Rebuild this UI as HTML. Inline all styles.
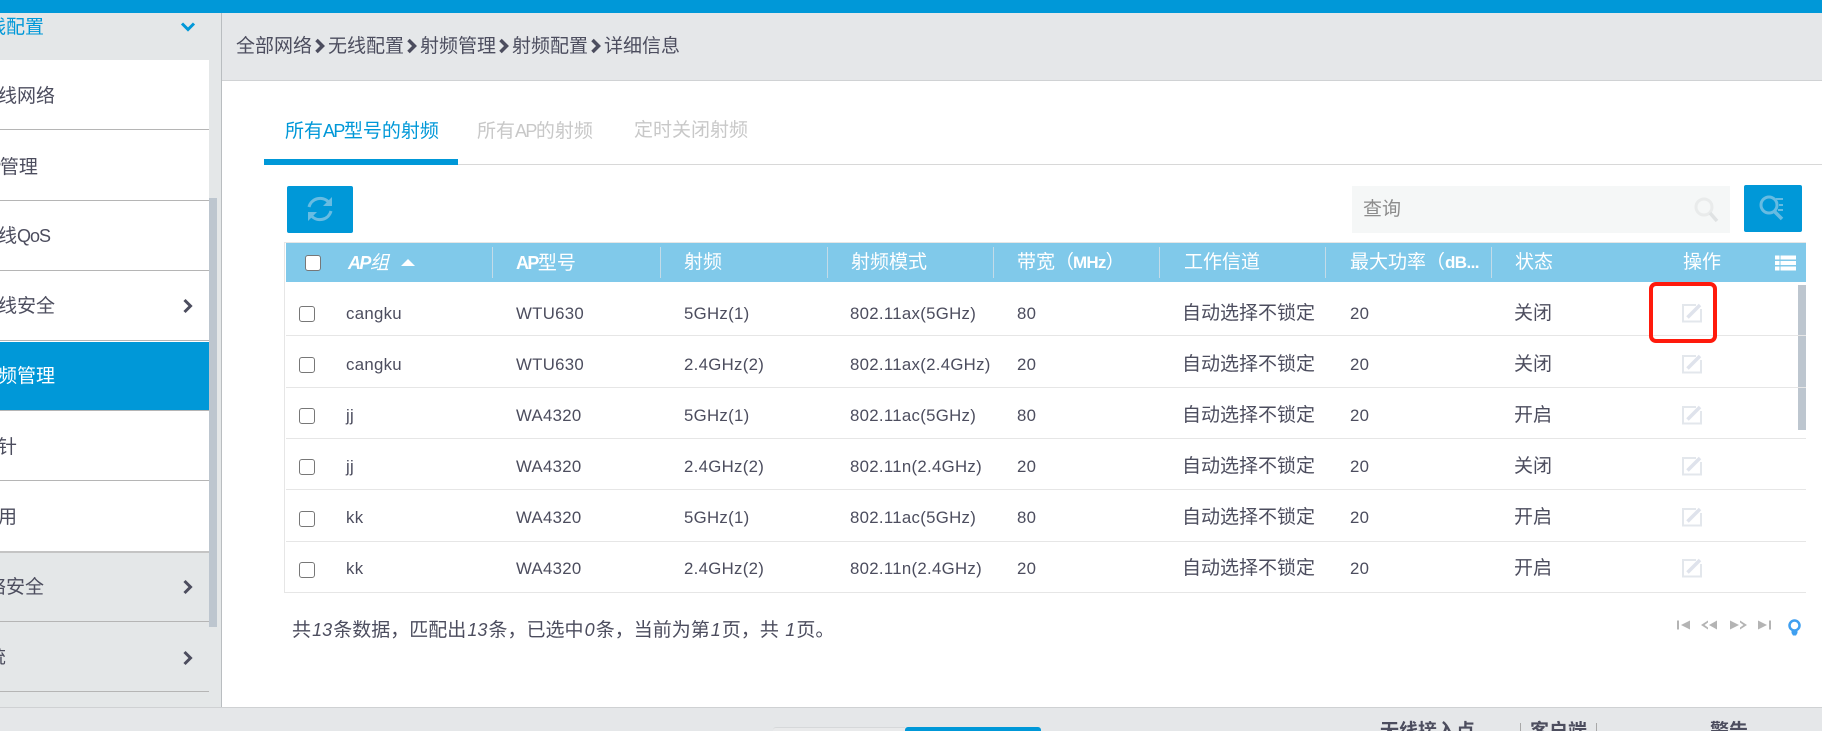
<!DOCTYPE html>
<html lang="zh-CN">
<head>
<meta charset="utf-8">
<title>射频配置</title>
<style>
html,body{margin:0;padding:0;width:1822px;height:731px;overflow:hidden;background:#fff}
body{position:relative;font-family:"Liberation Sans","Noto Sans CJK SC",sans-serif;color:#4c4d5e;font-size:19px}
.a,.t,.r,.s,.c,svg{position:absolute}
.t{white-space:nowrap;line-height:24px;height:24px}
.h{color:#fff}
.c{width:14px;height:14px;border:1px solid #777;border-radius:3px;background:#fff}
.d{font-size:16.8px;letter-spacing:.3px;margin-top:1px}
.m{font-size:19px;margin-top:1px}
.s{width:1px;top:247px;height:31px;background:#c3dbe8}
.r{left:286px;width:1520px;height:1px;background:#e6e6e6}
.n{left:0;width:209px;height:1px;background:#b5b5b5}
.l{font-size:18px;letter-spacing:-1.6px}
i{font-style:italic;font-size:18px;padding:0 1.1px}
</style>
</head>
<body>
<!-- top bar -->
<div class="a" style="left:0;top:0;width:1822px;height:13px;background:#0098d8"></div>

<!-- sidebar -->
<div class="a" style="left:0;top:13px;width:221px;height:694px;background:#e4e7e8"></div>
<div class="a" style="left:221px;top:13px;width:1px;height:694px;background:#b9bdc0"></div>
<div class="a" style="left:0;top:60px;width:209px;height:491px;background:#fff"></div>
<div class="a" style="left:0;top:342px;width:209px;height:68px;background:#0098d8"></div>
<div class="a" style="left:209px;top:198px;width:8px;height:429px;background:#bdc6cf"></div>
<div class="a n" style="top:129px"></div>
<div class="a n" style="top:200px"></div>
<div class="a n" style="top:270px"></div>
<div class="a n" style="top:340px"></div>
<div class="a n" style="top:410px"></div>
<div class="a n" style="top:480px"></div>
<div class="a n" style="top:551px;height:2px;background:#c4c4c4"></div>
<div class="a n" style="top:621px"></div>
<div class="a n" style="top:691px"></div>

<div class="t" style="left:-32px;top:16px;color:#0098d8">无线配置</div>
<div class="t" style="left:-21px;top:85px">无线网络</div>
<div class="t" style="left:-21px;top:155px"><span class="l">AP</span>管理</div>
<div class="t" style="left:-21px;top:224px">无线<span class="l" style="letter-spacing:-1px">QoS</span></div>
<div class="t" style="left:-21px;top:295px">无线安全</div>
<div class="t" style="left:-21px;top:365px;color:#fff">射频管理</div>
<div class="t" style="left:-21px;top:436px">探针</div>
<div class="t" style="left:-21px;top:506px">应用</div>
<div class="t" style="left:-32px;top:576px">网络安全</div>
<div class="t" style="left:-32px;top:646px">系统</div>

<svg style="left:180px;top:21px" width="16" height="12" viewBox="0 0 16 12"><path d="M2 2.5 L8 8.5 L14 2.5" fill="none" stroke="#0098d8" stroke-width="3"/></svg>
<svg style="left:182px;top:298px" width="12" height="16" viewBox="0 0 12 16"><path d="M2.5 2 L8.5 8 L2.5 14" fill="none" stroke="#4c4d5e" stroke-width="3"/></svg>
<svg style="left:182px;top:579px" width="12" height="16" viewBox="0 0 12 16"><path d="M2.5 2 L8.5 8 L2.5 14" fill="none" stroke="#4c4d5e" stroke-width="3"/></svg>
<svg style="left:182px;top:650px" width="12" height="16" viewBox="0 0 12 16"><path d="M2.5 2 L8.5 8 L2.5 14" fill="none" stroke="#4c4d5e" stroke-width="3"/></svg>

<!-- breadcrumb -->
<div class="a" style="left:222px;top:13px;width:1600px;height:67px;background:#e5e7e9;border-bottom:1px solid #d0d2d4"></div>
<div class="t" style="left:236px;top:35px">全部网络</div>
<div class="t" style="left:328px;top:35px">无线配置</div>
<div class="t" style="left:420px;top:35px">射频管理</div>
<div class="t" style="left:512px;top:35px">射频配置</div>
<div class="t" style="left:604px;top:35px">详细信息</div>
<svg style="left:314px;top:38px" width="12" height="16" viewBox="0 0 12 16"><path d="M2.5 2 L8.5 8 L2.5 14" fill="none" stroke="#4c4d5e" stroke-width="3.5"/></svg>
<svg style="left:406px;top:38px" width="12" height="16" viewBox="0 0 12 16"><path d="M2.5 2 L8.5 8 L2.5 14" fill="none" stroke="#4c4d5e" stroke-width="3.5"/></svg>
<svg style="left:498px;top:38px" width="12" height="16" viewBox="0 0 12 16"><path d="M2.5 2 L8.5 8 L2.5 14" fill="none" stroke="#4c4d5e" stroke-width="3.5"/></svg>
<svg style="left:590px;top:38px" width="12" height="16" viewBox="0 0 12 16"><path d="M2.5 2 L8.5 8 L2.5 14" fill="none" stroke="#4c4d5e" stroke-width="3.5"/></svg>

<!-- tabs -->
<div class="t" style="left:285px;top:119px;color:#0098d8">所有<span class="l">AP</span>型号的射频</div>
<div class="t" style="left:477px;top:119px;color:#c8c8c8">所有<span class="l">AP</span>的射频</div>
<div class="t" style="left:634px;top:119px;color:#c8c8c8">定时关闭射频</div>
<div class="a" style="left:264px;top:164px;width:1558px;height:1px;background:#d8d8d8"></div>
<div class="a" style="left:264px;top:159px;width:194px;height:6px;background:#0098d8"></div>

<!-- toolbar -->
<div class="a" style="left:287px;top:186px;width:66px;height:47px;background:#0098d8;border-radius:2px"></div>
<svg style="left:305px;top:194px" width="30" height="30" viewBox="0 0 30 30" fill="none"><path d="M4 13 A11.5 11.5 0 0 1 23.5 8" stroke="#68bce2" stroke-width="3"/><path d="M26 17 A11.5 11.5 0 0 1 6.5 22" stroke="#68bce2" stroke-width="3"/><path d="M27 3 L27 12 L18 12 Z" fill="#68bce2"/><path d="M3 27 L3 18 L12 18 Z" fill="#68bce2"/></svg>

<div class="a" style="left:1352px;top:186px;width:378px;height:47px;background:#f5f7f7"></div>
<div class="t" style="left:1363px;top:198px;color:#8c8c8c">查询</div>
<svg style="left:1693px;top:196px" width="26" height="28" viewBox="0 0 26 28" fill="none"><circle cx="11" cy="11" r="8" stroke="#e9ebeb" stroke-width="3"/><path d="M17 17 L24 25" stroke="#dfe2e3" stroke-width="3.5"/></svg>

<div class="a" style="left:1744px;top:185px;width:58px;height:47px;background:#0098d8;border-radius:2px"></div>
<svg style="left:1758px;top:193px" width="28" height="30" viewBox="0 0 28 30" fill="none"><circle cx="11" cy="12" r="8" stroke="#66bbe2" stroke-width="3"/><path d="M16 18 L24 26" stroke="#66bbe2" stroke-width="3.5"/><path d="M18 6 H25 M21 12 H25 M20 17 H25" stroke="#66bbe2" stroke-width="2"/></svg>

<!-- table frame -->
<div class="a" style="left:284px;top:242px;width:1522px;height:351px;border:1px solid #e6e6e6;box-sizing:border-box;border-right:none"></div>
<div class="a" style="left:286px;top:243px;width:1520px;height:39px;background:#80c9ea"></div>
<div class="s" style="left:492px"></div>
<div class="s" style="left:660px"></div>
<div class="s" style="left:827px"></div>
<div class="s" style="left:993px"></div>
<div class="s" style="left:1159px"></div>
<div class="s" style="left:1325px"></div>
<div class="s" style="left:1491px"></div>

<div class="c" style="left:305px;top:255px"></div>
<div class="t h" style="left:348px;top:251px;font-style:italic"><span class="l" style="font-weight:bold">AP</span>组</div>
<svg style="left:401px;top:259px" width="14" height="8" viewBox="0 0 14 8"><path d="M7 0 L14 7 L0 7 Z" fill="#fff"/></svg>
<div class="t h" style="left:516px;top:251px"><span class="l" style="font-weight:bold">AP</span>型号</div>
<div class="t h" style="left:684px;top:251px">射频</div>
<div class="t h" style="left:851px;top:251px">射频模式</div>
<div class="t h" style="left:1017px;top:251px">带宽（<span style="font-size:17px;font-weight:bold;letter-spacing:-.8px;margin-left:-1px">MHz</span>）</div>
<div class="t h" style="left:1184px;top:251px">工作信道</div>
<div class="t h" style="left:1350px;top:251px">最大功率（<span style="font-weight:bold;font-size:17px;letter-spacing:-.6px">dB...</span></div>
<div class="t h" style="left:1515px;top:251px">状态</div>
<div class="t h" style="left:1683px;top:251px">操作</div>
<svg style="left:1775px;top:255px" width="21" height="16" viewBox="0 0 21 16"><path d="M0 2.5H21M0 8H21M0 13.5H21" stroke="#fff" stroke-width="4"/><path d="M5 0V16" stroke="#80c9ea" stroke-width="1"/></svg>

<div class="a" style="left:1798px;top:285px;width:8px;height:145px;background:#bdc6cf"></div>

<!-- rows -->
<div class="r" style="top:335px"></div>
<div class="r" style="top:387px"></div>
<div class="r" style="top:438px"></div>
<div class="r" style="top:489px"></div>
<div class="r" style="top:541px"></div>

<div class="c" style="left:299px;top:306px"></div>
<div class="t d" style="left:346px;top:301px">cangku</div><div class="t d" style="left:516px;top:301px">WTU630</div><div class="t d" style="left:684px;top:301px">5GHz(1)</div><div class="t d" style="left:850px;top:301px">802.11ax(5GHz)</div><div class="t d" style="left:1017px;top:301px">80</div><div class="t m" style="left:1182px;top:301px">自动选择不锁定</div><div class="t d" style="left:1350px;top:301px">20</div><div class="t m" style="left:1514px;top:301px">关闭</div>

<div class="c" style="left:299px;top:357px"></div>
<div class="t d" style="left:346px;top:352px">cangku</div><div class="t d" style="left:516px;top:352px">WTU630</div><div class="t d" style="left:684px;top:352px">2.4GHz(2)</div><div class="t d" style="left:850px;top:352px">802.11ax(2.4GHz)</div><div class="t d" style="left:1017px;top:352px">20</div><div class="t m" style="left:1182px;top:352px">自动选择不锁定</div><div class="t d" style="left:1350px;top:352px">20</div><div class="t m" style="left:1514px;top:352px">关闭</div>

<div class="c" style="left:299px;top:408px"></div>
<div class="t d" style="left:346px;top:403px">jj</div><div class="t d" style="left:516px;top:403px">WA4320</div><div class="t d" style="left:684px;top:403px">5GHz(1)</div><div class="t d" style="left:850px;top:403px">802.11ac(5GHz)</div><div class="t d" style="left:1017px;top:403px">80</div><div class="t m" style="left:1182px;top:403px">自动选择不锁定</div><div class="t d" style="left:1350px;top:403px">20</div><div class="t m" style="left:1514px;top:403px">开启</div>

<div class="c" style="left:299px;top:459px"></div>
<div class="t d" style="left:346px;top:454px">jj</div><div class="t d" style="left:516px;top:454px">WA4320</div><div class="t d" style="left:684px;top:454px">2.4GHz(2)</div><div class="t d" style="left:850px;top:454px">802.11n(2.4GHz)</div><div class="t d" style="left:1017px;top:454px">20</div><div class="t m" style="left:1182px;top:454px">自动选择不锁定</div><div class="t d" style="left:1350px;top:454px">20</div><div class="t m" style="left:1514px;top:454px">关闭</div>

<div class="c" style="left:299px;top:511px"></div>
<div class="t d" style="left:346px;top:505px">kk</div><div class="t d" style="left:516px;top:505px">WA4320</div><div class="t d" style="left:684px;top:505px">5GHz(1)</div><div class="t d" style="left:850px;top:505px">802.11ac(5GHz)</div><div class="t d" style="left:1017px;top:505px">80</div><div class="t m" style="left:1182px;top:505px">自动选择不锁定</div><div class="t d" style="left:1350px;top:505px">20</div><div class="t m" style="left:1514px;top:505px">开启</div>

<div class="c" style="left:299px;top:562px"></div>
<div class="t d" style="left:346px;top:556px">kk</div><div class="t d" style="left:516px;top:556px">WA4320</div><div class="t d" style="left:684px;top:556px">2.4GHz(2)</div><div class="t d" style="left:850px;top:556px">802.11n(2.4GHz)</div><div class="t d" style="left:1017px;top:556px">20</div><div class="t m" style="left:1182px;top:556px">自动选择不锁定</div><div class="t d" style="left:1350px;top:556px">20</div><div class="t m" style="left:1514px;top:556px">开启</div>

<!-- edit icons -->
<svg style="left:1682px;top:303px" width="20" height="20" viewBox="0 0 20 20" fill="none"><path d="M14 2H1V18.5H19V6" stroke="#e3e7ec" stroke-width="2"/><path d="M5.5 14.5 L18 2" stroke="#dfe3ec" stroke-width="3.5"/></svg>
<svg style="left:1682px;top:354px" width="20" height="20" viewBox="0 0 20 20" fill="none"><path d="M14 2H1V18.5H19V6" stroke="#e3e7ec" stroke-width="2"/><path d="M5.5 14.5 L18 2" stroke="#dfe3ec" stroke-width="3.5"/></svg>
<svg style="left:1682px;top:405px" width="20" height="20" viewBox="0 0 20 20" fill="none"><path d="M14 2H1V18.5H19V6" stroke="#e3e7ec" stroke-width="2"/><path d="M5.5 14.5 L18 2" stroke="#dfe3ec" stroke-width="3.5"/></svg>
<svg style="left:1682px;top:456px" width="20" height="20" viewBox="0 0 20 20" fill="none"><path d="M14 2H1V18.5H19V6" stroke="#e3e7ec" stroke-width="2"/><path d="M5.5 14.5 L18 2" stroke="#dfe3ec" stroke-width="3.5"/></svg>
<svg style="left:1682px;top:507px" width="20" height="20" viewBox="0 0 20 20" fill="none"><path d="M14 2H1V18.5H19V6" stroke="#e3e7ec" stroke-width="2"/><path d="M5.5 14.5 L18 2" stroke="#dfe3ec" stroke-width="3.5"/></svg>
<svg style="left:1682px;top:558px" width="20" height="20" viewBox="0 0 20 20" fill="none"><path d="M14 2H1V18.5H19V6" stroke="#e3e7ec" stroke-width="2"/><path d="M5.5 14.5 L18 2" stroke="#dfe3ec" stroke-width="3.5"/></svg>

<!-- red annotation -->
<div class="a" style="left:1649px;top:282px;width:68px;height:61px;box-sizing:border-box;border:4px solid #ff1a0c;border-radius:7px"></div>

<!-- footer text -->
<div class="t" style="left:292px;top:618px">共<i>13</i>条数据，匹配出<i>13</i>条，已选中<i>0</i>条，当前为第<i>1</i>页，共 <i>1</i>页。</div>

<!-- pager -->
<svg style="left:1676px;top:618px" width="97" height="14" viewBox="0 0 97 14" fill="#b4b4b4"><path d="M1 2.5h2v9H1zM14 2.5v9L5 7z"/><path d="M25 7l7-4.5v2L28.5 7l3.5 2.5v2zM41 2.5v9L33 7z"/><path d="M54 2.5v9L63 7zM64 2.5L71 7l-7 4.5v-2L67.5 7 64 4.5z"/><path d="M82 2.5v9L91 7zM93 2.5h2v9h-2z"/></svg>
<svg style="left:1787px;top:619px" width="15" height="17" viewBox="0 0 15 17" fill="none"><circle cx="7.5" cy="6.5" r="5" stroke="#3f9ff0" stroke-width="2.5"/><path d="M4.5 11.5h6v2.5l-1.5 2.5h-3L4.5 14z" fill="#3f9ff0"/></svg>

<!-- bottom bar -->
<div class="a" style="left:0;top:707px;width:1822px;height:24px;background:#e5e7e9;border-top:1px solid #cfd1d3;box-sizing:border-box"></div>
<div class="a" style="left:773px;top:727px;width:132px;height:4px;background:#e9eaeb;border-top:1px solid #d6d8da;box-sizing:border-box;border-radius:3px 0 0 0"></div>
<div class="a" style="left:905px;top:727px;width:136px;height:4px;background:#0098d8;border-radius:3px 3px 0 0"></div>
<div class="t" style="left:1380px;top:720px;font-weight:bold">无线接入点</div>
<div class="t" style="left:1530px;top:720px;font-weight:bold">客户端</div>
<div class="t" style="left:1710px;top:720px;font-weight:bold">警告</div>
<div class="a" style="left:1520px;top:723px;width:1px;height:8px;background:#a8a8a8"></div>
<div class="a" style="left:1596px;top:723px;width:1px;height:8px;background:#a8a8a8"></div>
</body>
</html>
